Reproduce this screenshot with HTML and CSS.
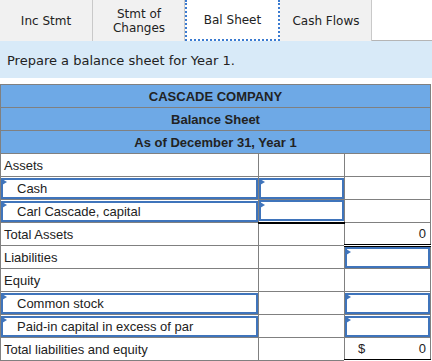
FILE: index.html
```html
<!DOCTYPE html>
<html>
<head>
    <title>Balance Sheet</title>
    <link rel="stylesheet" href="styles.css">
</head>
<body>
    <div class="tabs">
        <div class="tab">Inc Stmt</div>
        <div class="tab">Stmt of<br>Changes</div>
        <div class="tab active">Bal Sheet</div>
        <div class="tab">Cash Flows</div>
        <div class="tab-rest"></div>
    </div>

    <div class="instructions">Prepare a balance sheet for Year 1.</div>

    <table class="sheet">
        <colgroup>
            <col class="col-label">
            <col class="col-amt">
            <col class="col-amt">
        </colgroup>
        <tr class="head"><td colspan="3">CASCADE COMPANY</td></tr>
        <tr class="head"><td colspan="3">Balance Sheet</td></tr>
        <tr class="head"><td colspan="3">As of December 31, Year 1</td></tr>

        <tr>
            <td>Assets</td>
            <td></td>
            <td></td>
        </tr>
        <tr>
            <td class="entry"><div class="box indent">Cash</div></td>
            <td class="entry"><div class="box"></div></td>
            <td></td>
        </tr>
        <tr>
            <td class="entry"><div class="box indent">Carl Cascade, capital</div></td>
            <td class="entry underline"><div class="box"></div></td>
            <td></td>
        </tr>
        <tr>
            <td>Total Assets</td>
            <td></td>
            <td class="num total">0</td>
        </tr>
        <tr>
            <td>Liabilities</td>
            <td></td>
            <td class="entry"><div class="box"></div></td>
        </tr>
        <tr>
            <td>Equity</td>
            <td></td>
            <td></td>
        </tr>
        <tr>
            <td class="entry"><div class="box indent">Common stock</div></td>
            <td></td>
            <td class="entry"><div class="box"></div></td>
        </tr>
        <tr>
            <td class="entry"><div class="box indent">Paid-in capital in excess of par</div></td>
            <td></td>
            <td class="entry"><div class="box"></div></td>
        </tr>
        <tr>
            <td>Total liabilities and equity</td>
            <td></td>
            <td class="num total"><span class="dollar">$</span>0</td>
        </tr>
    </table>
</body>
</html>
```

FILE: styles.css
```css
body {
    margin: 0;
    font-family: "Liberation Sans", Arial, sans-serif;
    color: #222;
    background: #fff;
}

.tabs {
    display: flex;
    height: 41px;
}

.tab {
    width: 92px;
    height: 41px;
    box-sizing: border-box;
    display: flex;
    align-items: center;
    justify-content: center;
    text-align: center;
    font-family: "DejaVu Sans", Verdana, sans-serif;
    font-size: 12px;
    line-height: 14px;
    color: #222;
    background: #f1f1f1;
    border-right: 1px solid #c9c9c9;
    border-left: 1px solid #f1f1f1;
}

.tab:first-child {
    border-left: none;
    width: 93px;
}

.tab.active {
    width: 95px;
    background: #fff;
    border: 2px dotted #3b7bd0;
    border-top: none;
}

.tab-rest {
    flex: 1;
    border-bottom: 1px solid #b5b5b5;
}

.instructions {
    height: 37px;
    box-sizing: border-box;
    padding: 12px 0 0 7px;
    background: #d8eaf8;
    font-family: "DejaVu Sans", Verdana, sans-serif;
    font-size: 13px;
    color: #222;
}

.sheet {
    margin-top: 6px;
    width: 431px;
    border-collapse: collapse;
    font-size: 13px;
}

.col-label {
    width: 258px;
}

.col-amt {
    width: 86px;
}

.sheet tr {
    height: 23px;
}

.sheet td {
    padding: 0 3px;
    border: 1px solid #808080;
    white-space: nowrap;
}

.head td {
    background: #6ea9e6;
    text-align: center;
    font-weight: bold;
    color: #222;
}

.sheet td.entry {
    padding: 0;
    position: relative;
}

.box {
    height: 21px;
    box-sizing: border-box;
    border: 2px solid #3f74bb;
    line-height: 17px;
}

.box.indent {
    padding-left: 14px;
}

/* little marker at the top left of each input */
.entry::before {
    content: "";
    position: absolute;
    left: 1px;
    top: 2px;
    border-top: 3px solid transparent;
    border-bottom: 3px solid transparent;
    border-left: 5px solid #3f74bb;
}

.sheet td.underline {
    border-bottom: 2px solid #000;
}

.num {
    text-align: right;
}

.sheet td.total {
    border-bottom: 3px double #000;
    padding-right: 4px;
}

.dollar {
    float: left;
    padding-left: 10px;
}
```
